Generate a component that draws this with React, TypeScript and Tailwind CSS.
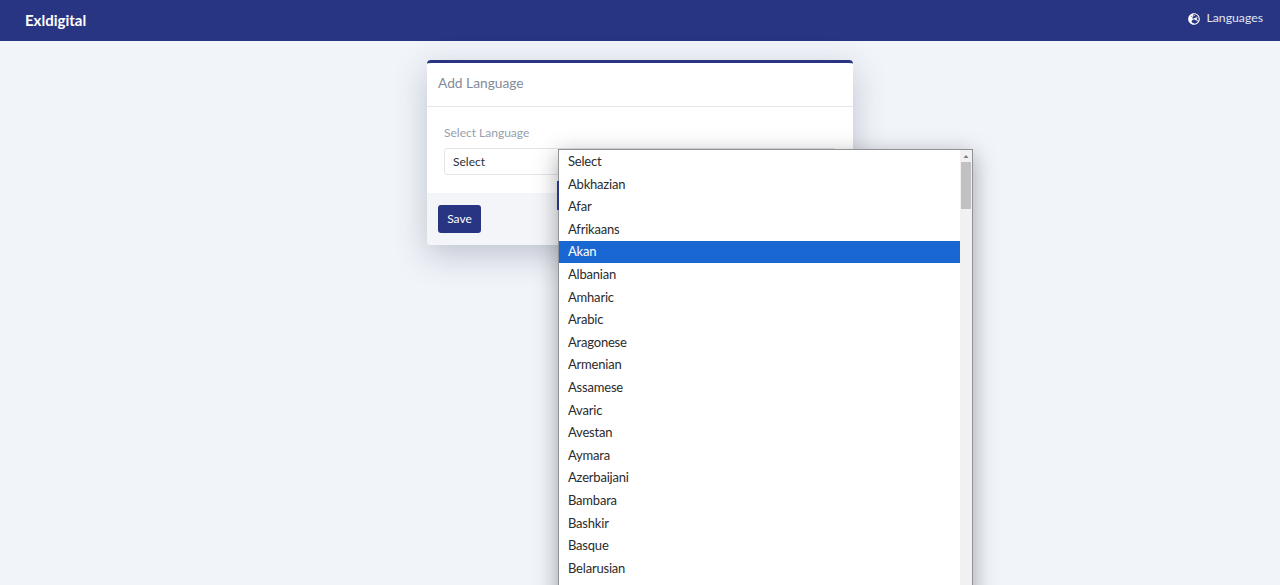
import React from "react";

const languages = ["Select","Abkhazian","Afar","Afrikaans","Akan","Albanian","Amharic","Arabic","Aragonese","Armenian","Assamese","Avaric","Avestan","Aymara","Azerbaijani","Bambara","Bashkir","Basque","Belarusian"];

function GlobeIcon() {
  return (
    <svg width="12" height="12" viewBox="0 0 496 512" fill="#fff">
      <path d="M248 8C111 8 0 119 0 256s111 248 248 248 248-111 248-248S385 8 248 8zm200 248c0 22.500-3.900 44.200-10.800 64.400h-20.300c-4.300 0-8.400-1.700-11.400-4.800l-32-32.600c-4.500-4.600-4.500-12.100.1-16.700l12.500-12.500v-8.700c0-3-1.200-5.900-3.300-8l-9.400-9.400c-2.100-2.100-5-3.300-8-3.300h-16c-6.200 0-11.300-5.100-11.300-11.300 0-3 1.200-5.900 3.300-8l9.400-9.400c2.100-2.100 5-3.300 8-3.300h32c6.200 0 11.300-5.100 11.300-11.300v-9.400c0-6.200-5.100-11.300-11.300-11.300h-36.700c-8.800 0-16 7.200-16 16v4.500c0 6.900-4.400 13-10.900 15.200l-31.600 10.500c-3.300 1.100-5.500 4.100-5.500 7.600v2.200c0 4.400-3.600 8-8 8h-16c-4.400 0-8-3.600-8-8s-3.600-8-8-8H247c-3 0-5.800 1.700-7.200 4.400l-9.400 18.700c-2.700 5.400-8.200 8.800-14.300 8.800H194c-8.800 0-16-7.200-16-16V199c0-4.200 1.700-8.300 4.700-11.300l20.100-20.100c4.600-4.600 7.200-10.900 7.200-17.500 0-3.400 2.200-6.500 5.500-7.600l40-13.300c1.700-.6 3.200-1.500 4.400-2.700l26.800-26.800c2.100-2.100 3.300-5 3.300-8 0-6.200-5.100-11.300-11.300-11.300H258l-16 16v8c0 4.400-3.600 8-8 8h-16c-4.400 0-8-3.600-8-8v-20c0-2.500 1.200-4.900 3.200-6.400l28.900-21.700c1.900-.1 3.800-.3 5.700-.3C358.300 56 448 145.700 448 256zM130.100 149.100c0-3 1.200-5.900 3.300-8l25.400-25.400c2.100-2.100 5-3.300 8-3.300 6.200 0 11.300 5.100 11.300 11.300v16c0 3-1.200 5.900-3.300 8l-9.400 9.400c-2.100 2.100-5 3.300-8 3.300h-16c-6.200 0-11.300-5.100-11.300-11.300zm128 306.400v-7.100c0-8.800-7.200-16-16-16h-20.200c-10.800 0-26.700-5.300-35.400-11.800l-22.200-16.700c-11.500-8.600-18.200-22.100-18.200-36.400v-23.900c0-16 8.400-30.800 22.100-39l42.900-25.700c7.100-4.200 15.200-6.500 23.400-6.500h31.200c10.900 0 21.400 3.900 29.700 10.900l43.200 37.100h18.300c8.500 0 16.600 3.400 22.600 9.400l17.300 17.300c3.400 3.400 8.100 5.300 12.900 5.300H423c-32.400 58.900-93.800 99.500-164.900 103.100z" />
    </svg>
  );
}

export default function App() {
  return (
    <div className="relative h-[585px] overflow-hidden bg-[#f1f4f9] font-['Lato','Noto_Sans',sans-serif]">
      <header className="flex h-[41px] items-center justify-between bg-[#283583] pl-[25px] pr-[17px]">
        <span className="text-[15px] font-bold leading-none text-white">Exldigital</span>
        <span className="-mt-[4px] flex items-center gap-[6px] text-[12.25px] leading-none text-[#e4e7f3]">
          <GlobeIcon />
          Languages
        </span>
      </header>

      <main className="flex justify-center pt-[19px]">
        <section className="w-[426px] overflow-hidden rounded-[4px] border-t-[3px] border-[#283583] bg-white shadow-[0_10px_32px_rgba(60,70,100,0.28)]">
          <div className="flex h-[44px] items-center border-b border-[#e5e7eb] px-[11px] pb-[3px] text-[13.75px] text-[#7f8c9b]">
            Add Language
          </div>
          <div className="h-[86px] px-[17px] pt-[17px]">
            <div className="text-[12px] leading-[17px] text-[#96a0ab]">Select Language</div>
            <div className="mt-[7px] flex h-[27px] w-[392px] items-center rounded-[3px] border border-[#e2e5ea] px-[8px] text-[12px] text-[#2c3338]">
              Select
            </div>
          </div>
          <div className="flex h-[52px] items-center bg-[#f3f5f9] px-[11px]">
            <button className="h-[28px] w-[43px] rounded-[3px] bg-[#283583] text-[12px] text-white">Save</button>
          </div>
        </section>
      </main>

      <div className="absolute left-[558px] top-[149px] flex h-[460px] w-[415px] border border-[#8f9296] bg-white shadow-[0_6px_22px_rgba(0,0,0,0.35)]">
        <ul className="mt-[0.5px] flex-1 text-[13px] tracking-[-0.2px] text-[#2b2b2b]">
          {languages.map((l, i) => (
            <li
              key={l}
              className={
                i === 4
                  ? "flex h-[22.6px] items-center bg-[#1967d2] pl-[9px] text-white"
                  : "flex h-[22.6px] items-center pl-[9px]"
              }
            >
              {l}
            </li>
          ))}
        </ul>
        <div className="relative w-[12px] bg-[#f1f1f1]">
          <svg className="absolute left-[3px] top-[4px]" width="6" height="5" viewBox="0 0 6 5" fill="#7d7d7d">
            <path d="M3 1 L5.500 4 L0.500 4 Z" />
          </svg>
          <div className="absolute left-[1px] top-[12px] h-[47px] w-[10px] bg-[#c1c1c1]" />
        </div>
      </div>
      <div className="absolute left-[557px] top-[181px] h-[29px] w-[2px] bg-[#283583]" />
    </div>
  );
}
